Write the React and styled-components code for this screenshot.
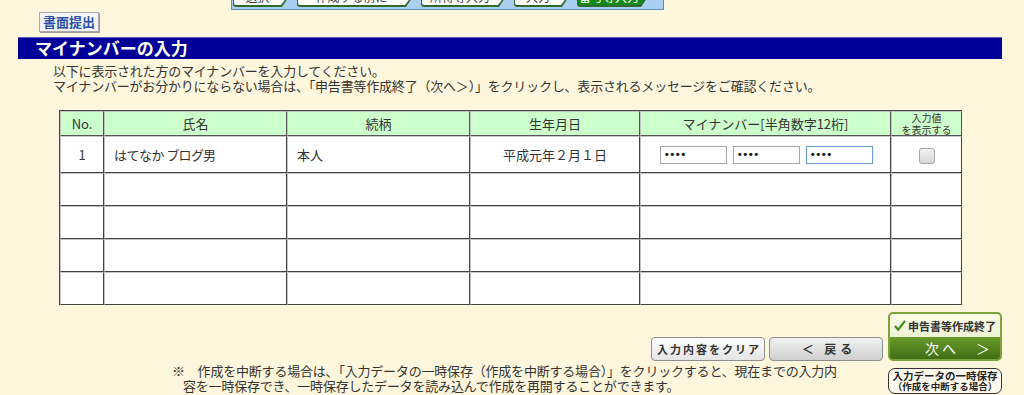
import React from "react";
import styled, { createGlobalStyle } from "styled-components";

const GlobalStyle = createGlobalStyle`
  body {
    margin: 0;
    background: #fef7dd;
    font-family: "Noto Sans CJK JP", "Noto Sans", sans-serif;
    color: #333;
  }
`;

const Page = styled.div`
  width: 1024px;
  height: 395px;
  box-sizing: border-box;
  padding: 0 22px 0 18px;
  overflow: hidden;
`;

const Stepper = styled.div`
  margin-left: 213px;
  width: 433px;
  height: 10px;
  box-sizing: border-box;
  background: #a9d0f2;
  border: 1px solid #5f8fb5;
  border-top: none;
  display: flex;
  align-items: flex-end;
  gap: 7px;
  padding: 0 2px 2px 1px;
  overflow: hidden;
`;

const Tab = styled.div`
  width: ${(p) => p.w}px;
  height: 24px;
  flex: none;
  box-sizing: border-box;
  padding: 1px 1px 2px 1px;
  background: #2f6a2f;
  clip-path: polygon(0 0, calc(100% - 8px) 0, 100% 50%, calc(100% - 8px) 100%, 0 100%);
  border-radius: 3px 0 0 3px;
`;

const TabFace = styled.div`
  height: 100%;
  box-sizing: border-box;
  background: ${(p) => (p.active ? "#138a16" : "#ffffff")};
  color: ${(p) => (p.active ? "#fff" : "#444")};
  clip-path: polygon(0 0, calc(100% - 8px) 0, 100% 50%, calc(100% - 8px) 100%, 0 100%);
  font-size: 12px;
  line-height: 14px;
  text-align: center;
  padding: 6px 8px 0 0;
  white-space: nowrap;
  overflow: hidden;
  border-radius: 2px 0 0 2px;
`;

const PaperButton = styled.button`
  margin: 2px 0 0 21px;
  height: 20px;
  padding: 0 3px;
  background: #f4f4f6;
  border: 1px solid #a8a8b0;
  box-shadow: 1px 1px 0 #9a9aa0;
  color: #2c50a8;
  font-family: inherit;
  font-size: 13px;
  font-weight: bold;
  line-height: 18px;
  display: block;
`;

const TitleBar = styled.h1`
  margin: 5px 0 0;
  height: 22px;
  box-sizing: border-box;
  background: #000099;
  border-top: 1px solid #5858c8;
  color: #fff;
  font-size: 17px;
  font-weight: bold;
  line-height: 20px;
  padding-left: 17px;
`;

const Lead = styled.p`
  margin: 4px 0 0 35px;
  font-size: 13px;
  line-height: 15px;
  color: #333;
  letter-spacing: -0.2px;
`;

const Table = styled.table`
  margin: 17px 0 0 41px;
  width: 902px;
  table-layout: fixed;
  border-collapse: separate;
  border-spacing: 0;
  border-top: 1px solid #444;
  border-left: 1px solid #444;
  font-size: 13px;
  color: #333;
`;

const Th = styled.th`
  height: 23px;
  padding: 0;
  background: #ccffcc;
  font-weight: normal;
  border-right: 1px solid #555;
  border-bottom: 1px solid #555;
  border-left: 1px solid #c4c4c4;
  border-top: 1px solid #c4c4c4;
  font-size: ${(p) => (p.small ? "10px" : "13px")};
  line-height: ${(p) => (p.small ? "11.5px" : "16px")};
  vertical-align: middle;
  white-space: nowrap;
`;

const Td = styled.td`
  height: ${(p) => (p.tall ? 35 : 31)}px;
  padding: 0 ${(p) => (p.align === "left" ? "9px" : "0")};
  background: #fff;
  border-right: 1px solid #444;
  border-bottom: 1px solid #444;
  border-left: 1px solid #c4c4c4;
  border-top: 1px solid #c4c4c4;
  text-align: ${(p) => p.align || "center"};
  vertical-align: middle;
  white-space: nowrap;
  font-feature-settings: ${(p) => (p.prop ? '"palt"' : "normal")};
`;

const NumberFields = styled.div`
  display: flex;
  justify-content: center;
  gap: 6px;
  padding-left: 1px;
`;

const NumberInput = styled.input`
  width: 67px;
  height: 18px;
  box-sizing: border-box;
  padding: 0 3px;
  border: 1px solid ${(p) => (p.focused ? "#6f9bd6" : "#a9a9a9")};
  box-shadow: ${(p) => (p.focused ? "0 0 1px #9bc0ee" : "none")};
  background: #fff;
  font-family: "DejaVu Sans", sans-serif;
  font-size: 11px;
  letter-spacing: -1px;
  color: #111;
  outline: none;
`;

const CheckBox = styled.span`
  display: inline-block;
  width: 14px;
  height: 14px;
  border: 1px solid #a6a6a6;
  border-radius: 3px;
  background: linear-gradient(#f2f2f2, #d6d6d6);
  vertical-align: middle;
`;

const Bottom = styled.div`
  display: flex;
  margin-top: 7px;
`;

const BottomLeft = styled.div`
  flex: 1;
  display: flex;
  flex-direction: column;
`;

const ButtonRow = styled.div`
  display: flex;
  justify-content: flex-end;
  gap: 4px;
  margin-top: 25px;
`;

const GrayButton = styled.button`
  width: 114px;
  height: 24px;
  border: 1px solid #8e8e8e;
  border-radius: 4px;
  background: ${(p) =>
    p.dark
      ? "linear-gradient(#f2f2f2, #cfcfcf)"
      : "linear-gradient(#ffffff, #e4e4e4)"};
  font-family: inherit;
  font-size: ${(p) => (p.dark ? "12px" : "11px")};
  font-weight: bold;
  color: #333;
  letter-spacing: ${(p) => (p.dark ? "4px" : "2px")};
  padding: 0 0 0 ${(p) => (p.dark ? "6px" : "2px")};
  line-height: 22px;
  white-space: nowrap;
  overflow: hidden;
`;

const Note = styled.p`
  margin: 2px 0 0 154px;
  font-size: 13px;
  line-height: 15px;
  color: #333;
  letter-spacing: -0.2px;
  white-space: nowrap;
  span {
    display: block;
  }
  span + span {
    padding-left: 11px;
  }
`;

const BottomRight = styled.div`
  width: 114px;
  margin-left: 5px;
  display: flex;
  flex-direction: column;
  gap: 7px;
`;

const NextButton = styled.button`
  width: 114px;
  height: 49px;
  padding: 0;
  border: 2px solid #7ca43c;
  border-radius: 5px;
  overflow: hidden;
  display: flex;
  flex-direction: column;
  font-family: inherit;
  background: #7ca43c;
`;

const NextTop = styled.span`
  height: 23px;
  width: 100%;
  background: linear-gradient(#fbfbe8, #eef3d4);
  font-size: 11px;
  font-weight: bold;
  color: #333;
  display: flex;
  align-items: center;
  justify-content: center;
  gap: 2px;
  white-space: nowrap;
  box-sizing: border-box;
`;

const NextBottom = styled.span`
  flex: 1;
  width: 100%;
  background: linear-gradient(#6a9a2a, #3f6e14);
  color: #fff;
  font-size: 14px;
  line-height: 22px;
  letter-spacing: 3px;
  text-align: center;
  padding-left: 28px;
  box-sizing: border-box;
  white-space: nowrap;
`;

const SaveButton = styled.button`
  width: 114px;
  height: 26px;
  padding: 0;
  border: 1.5px solid #333;
  border-radius: 7px;
  background: #fffaf0;
  font-family: inherit;
  font-weight: bold;
  color: #222;
  display: flex;
  flex-direction: column;
  align-items: center;
  justify-content: center;
  white-space: nowrap;
  span {
    font-size: 10.5px;
    line-height: 11.5px;
  }
  span + span {
    font-size: 9.5px;
  }
`;

const steps = [
  { w: 57, label: "選択" },
  { w: 117, label: "作成する前に" },
  { w: 86, label: "所得等入力" },
  { w: 56, label: "入力" },
  { w: 72, label: "番号等入力", active: true },
];

const emptyRows = [1, 2, 3, 4];

export default function App() {
  return (
    <Page>
      <GlobalStyle />
      <Stepper>
        {steps.map((s) => (
          <Tab key={s.w} w={s.w}>
            <TabFace active={s.active}>{s.label}</TabFace>
          </Tab>
        ))}
      </Stepper>
      <PaperButton>書面提出</PaperButton>
      <TitleBar>マイナンバーの入力</TitleBar>
      <Lead>
        以下に表示された方のマイナンバーを入力してください。
        <br />
        マイナンバーがお分かりにならない場合は、「申告書等作成終了（次へ＞）」をクリックし、表示されるメッセージをご確認ください。
      </Lead>
      <Table>
        <colgroup>
          <col style={{ width: 44 }} />
          <col style={{ width: 183 }} />
          <col style={{ width: 183 }} />
          <col style={{ width: 170 }} />
          <col style={{ width: 251 }} />
          <col style={{ width: 71 }} />
        </colgroup>
        <thead>
          <tr>
            <Th>No.</Th>
            <Th>氏名</Th>
            <Th>続柄</Th>
            <Th>生年月日</Th>
            <Th>マイナンバー[半角数字12桁]</Th>
            <Th small>
              入力値
              <br />
              を表示する
            </Th>
          </tr>
        </thead>
        <tbody>
          <tr>
            <Td tall>1</Td>
            <Td tall align="left" prop>はてなか ブログ男</Td>
            <Td tall align="left">本人</Td>
            <Td tall>平成元年２月１日</Td>
            <Td tall>
              <NumberFields>
                <NumberInput type="password" defaultValue="1234" readOnly />
                <NumberInput type="password" defaultValue="1234" readOnly />
                <NumberInput type="password" defaultValue="1234" readOnly focused />
              </NumberFields>
            </Td>
            <Td tall>
              <CheckBox />
            </Td>
          </tr>
          {emptyRows.map((r) => (
            <tr key={r}>
              <Td />
              <Td />
              <Td />
              <Td />
              <Td />
              <Td />
            </tr>
          ))}
        </tbody>
      </Table>
      <Bottom>
        <BottomLeft>
          <ButtonRow>
            <GrayButton>入力内容をクリア</GrayButton>
            <GrayButton dark>＜ 戻る</GrayButton>
          </ButtonRow>
          <Note>
            <span>
              ※　作成を中断する場合は、「入力データの一時保存（作成を中断する場合）」をクリックすると、現在までの入力内
            </span>
            <span>容を一時保存でき、一時保存したデータを読み込んで作成を再開することができます。</span>
          </Note>
        </BottomLeft>
        <BottomRight>
          <NextButton>
            <NextTop>
              <svg width="12" height="11" viewBox="0 0 13 12">
                <path d="M1 6.5 L4.5 10.5 L12 1" fill="none" stroke="#3f8a1e" strokeWidth="2.4" />
              </svg>
              申告書等作成終了
            </NextTop>
            <NextBottom>次へ　＞</NextBottom>
          </NextButton>
          <SaveButton>
            <span>入力データの一時保存</span>
            <span>（作成を中断する場合）</span>
          </SaveButton>
        </BottomRight>
      </Bottom>
    </Page>
  );
}
